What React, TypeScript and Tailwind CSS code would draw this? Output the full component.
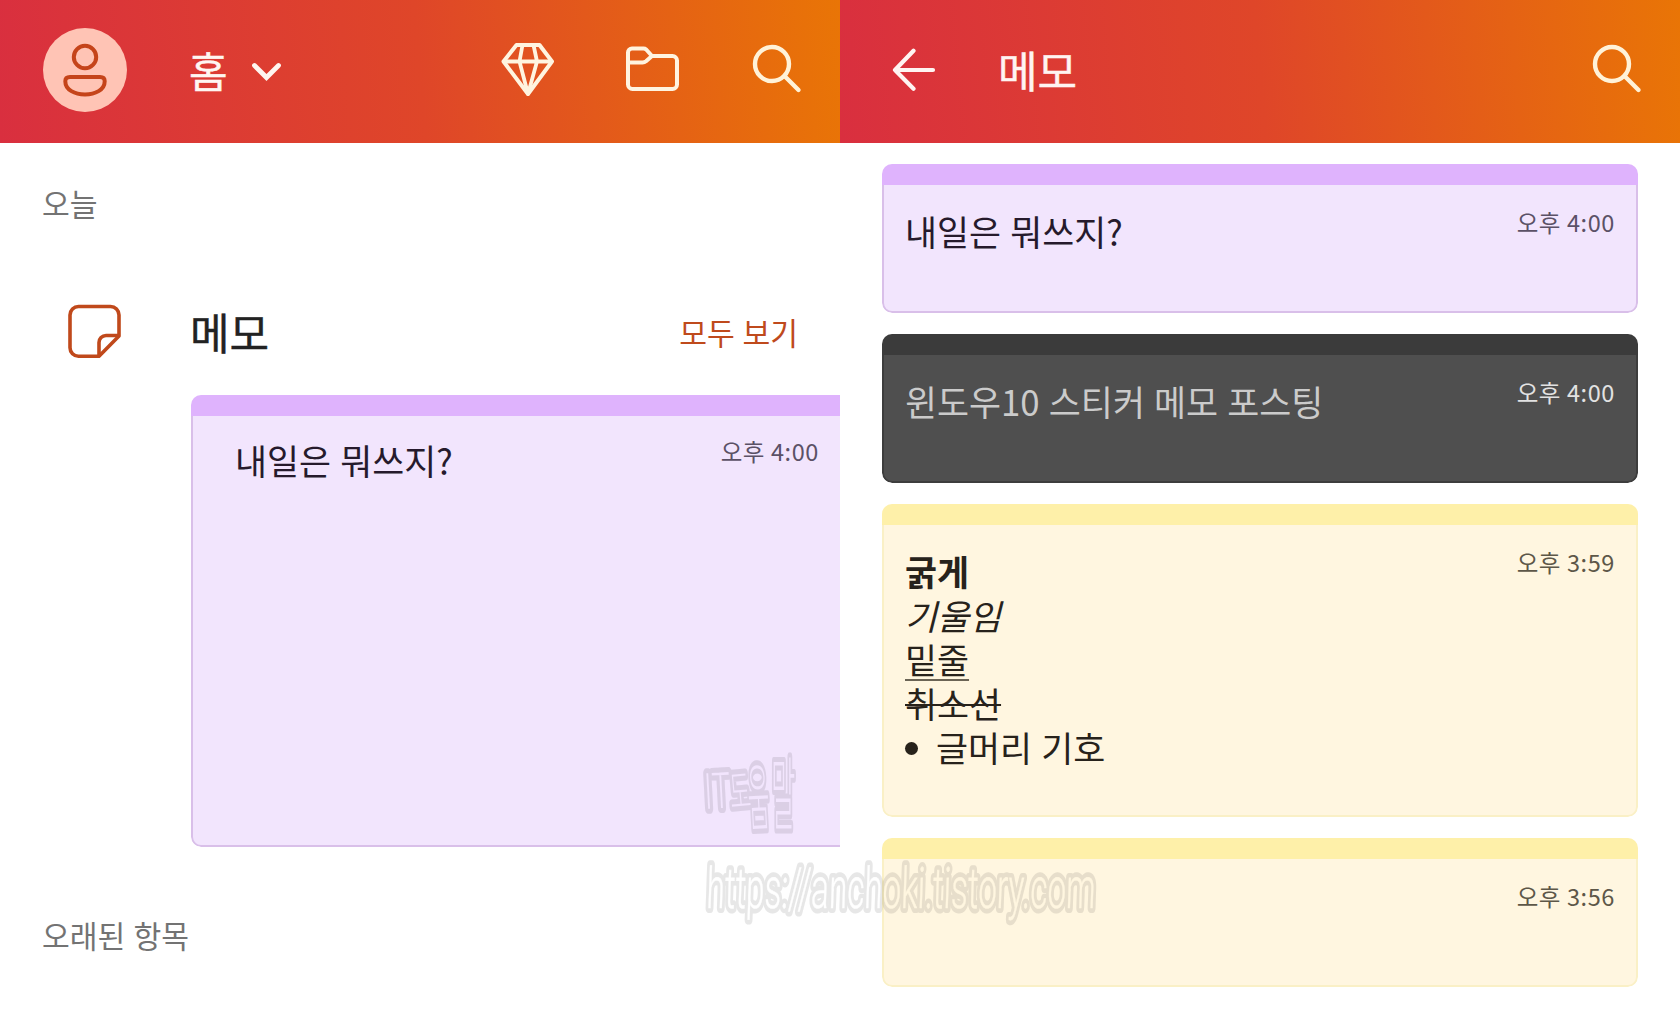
import clsx from "clsx";
import type { ReactNode } from "react";

type Tone = "purple" | "dark" | "yellow";

interface NoteProps {
  tone: Tone;
  time: string;
  className?: string;
  bodyClass?: string;
  children?: ReactNode;
}

const tones: Record<Tone, { card: string; bar: string; text: string; time: string }> = {
  purple: {
    card: "border-[#d9bfe9] bg-[#f2e5fd]",
    bar: "bg-[#dfb3fd]",
    text: "text-[#261a2c]",
    time: "text-[#5b5166]",
  },
  dark: {
    card: "border-[#3d3d3d] bg-[#4f4f4f]",
    bar: "bg-[#3b3b3b]",
    text: "text-[#cbcbcb]",
    time: "text-[#e2e2e2]",
  },
  yellow: {
    card: "border-[#faf0c6] bg-[#fff6e0]",
    bar: "bg-[#fef0a9]",
    text: "text-[#27221b]",
    time: "text-[#5d5748]",
  },
};

const gradient = "bg-[linear-gradient(85deg,#d92f3f_0%,#df4629_50%,#e97506_100%)]";

const Note = ({ tone, time, className, bodyClass, children }: NoteProps) => {
  const t = tones[tone];
  return (
    <article className={clsx("flex flex-col overflow-hidden", className)}>
      <div className={clsx("h-[21px] shrink-0", t.bar)} />
      <div className={clsx("flex flex-1 items-start justify-between border-2 border-t-0", t.card, bodyClass)}>
        <div className={clsx("text-[34.8px] leading-[44px] [word-spacing:1.4px]", t.text)}>{children}</div>
        <time className={clsx("mt-px text-[23.5px] leading-6 tracking-[0.6px]", t.time)}>{time}</time>
      </div>
    </article>
  );
};

const Avatar = () => (
  <div className="flex size-[84px] items-center justify-center rounded-full bg-[#ffc4b5]">
    <svg className="size-[84px]" viewBox="0 0 84 84" fill="none" stroke="#c5441a" strokeWidth="4">
      <circle cx="42" cy="29" r="11.2" />
      <path d="M27 49h30c3 0 4.700 1.600 4.700 4.200C61.700 62 52 66.500 42 66.500S22.300 62 22.300 53.200C22.300 50.600 24 49 27 49Z" />
    </svg>
  </div>
);

const ChevronIcon = () => (
  <svg className="h-5 w-8" viewBox="0 0 32 20" fill="none" stroke="#fff6f0" strokeWidth="4.800" strokeLinecap="round">
    <path d="M4.500 4.500 16.500 16.500 28.500 4.500" />
  </svg>
);

const DiamondIcon = () => (
  <svg className="size-14" viewBox="0 0 56 56" fill="none" stroke="#fff4e0" strokeWidth="4" strokeLinejoin="round">
    <path d="M16.500 3H39.500L52 19.500 28 52 3.500 19.500Z" />
    <path d="M3.500 19.500H52M22.500 3 19.500 19.500 28 52l9-32.500L33.500 3" strokeWidth="3.800" />
  </svg>
);

const FolderIcon = () => (
  <svg className="size-14" viewBox="0 0 56 56" fill="none" stroke="#fff4e0" strokeWidth="4" strokeLinejoin="round">
    <path d="M3 10.500a4 4 0 0 1 4-4h11.500q1.500 0 2.700 1L27 14h20.500a4.500 4.500 0 0 1 4.500 4.500V42.500a4.500 4.500 0 0 1-4.500 4.500h-40A4.500 4.500 0 0 1 3 42.500Z" />
    <path d="M3 20.500h14.500q2 0 3.500-1.200l6-5.300" />
  </svg>
);

const SearchIcon = () => (
  <svg className="h-[52px] w-[50px]" viewBox="0 0 50 52" fill="none" stroke="#fff2d8" strokeWidth="4.400" strokeLinecap="round">
    <circle cx="20" cy="20" r="17" />
    <path d="m33 32.500 13.500 13.500" />
  </svg>
);

const BackIcon = () => (
  <svg className="h-11 w-[46px]" viewBox="0 0 46 44" fill="none" stroke="#fff4f2" strokeWidth="4.200" strokeLinecap="round" strokeLinejoin="round">
    <path d="M42 22H4M22.500 2.800 4 22l18.500 18.800" />
  </svg>
);

const NoteIcon = () => (
  <svg className="size-14" viewBox="0 0 56 56" fill="none" stroke="#c0491b" strokeWidth="3.600" strokeLinejoin="round">
    <path d="M33 52.200H12.500a8.500 8.500 0 0 1-8.500-8.500V11A8.500 8.500 0 0 1 12.500 2.500h32A8.500 8.500 0 0 1 53 11v21Z" />
    <path d="M53 31.500H40a7 7 0 0 0-7 7v13.700" />
  </svg>
);

// Hollow lettering: a wide stroke with the middle of each letter cut out
const Watermark = () => (
  <svg className="pointer-events-none absolute left-[690px] top-[740px] h-[220px] w-[430px]" viewBox="0 0 430 220">
    <defs>
      <g id="mark-name" fontFamily="Roboto, 'Noto Sans CJK KR', sans-serif" fontWeight="300">
        <text transform="translate(15 69) rotate(-3) scale(.62 1)" fontSize="50">IT</text>
        <text transform="translate(41 69) rotate(-5) scale(.5 1)" fontSize="46">도</text>
        <text transform="translate(59 85) rotate(-3) scale(.32 1)" fontSize="74">움</text>
        <text transform="translate(81 83) scale(.33 1)" fontSize="80">말</text>
      </g>
      <g id="mark-url" fontFamily="Roboto, sans-serif" fontWeight="300">
        <text transform="translate(16 168) skewX(-2)" fontSize="57" textLength="389" lengthAdjust="spacingAndGlyphs">
          https://anchoki.tistory.com
        </text>
      </g>
      <mask id="hollow">
        <g stroke="white" fill="white" strokeLinejoin="round" strokeLinecap="round">
          <use href="#mark-name" strokeWidth="10" />
          <use href="#mark-url" strokeWidth="10" />
        </g>
        <use href="#mark-name" fill="black" />
        <use href="#mark-url" fill="black" stroke="black" strokeWidth="0.600" />
      </mask>
    </defs>
    <rect width="430" height="220" fill="#000" fillOpacity="0.095" mask="url(#hollow)" />
  </svg>
);

const HomePane = () => (
  <section className="h-full w-[840px] overflow-hidden">
    <header className={clsx("flex h-[143px] items-center pb-[3px] pl-[43px] pr-[38px]", gradient)}>
      <Avatar />
      <h1 className="ml-[62px] pb-px text-[42px] leading-none text-[#fff6f2] [-webkit-text-stroke:0.4px]">홈</h1>
      <div className="ml-[22px] pt-0.5">
        <ChevronIcon />
      </div>
      <div className="ml-auto flex items-center">
        <DiamondIcon />
        <div className="ml-[69px]">
          <FolderIcon />
        </div>
        <div className="ml-[71px]">
          <SearchIcon />
        </div>
      </div>
    </header>
    <div className="pl-[42px] pt-[39px] text-[30.2px] leading-[42px] text-[#737373]">오늘</div>
    <div className="mt-[78px] flex h-[60px] items-center pl-[66px] pr-[42px]">
      <NoteIcon />
      <h2 className="ml-[68px] pb-0.5 text-[43px] leading-[58px] text-[#222] [-webkit-text-stroke:0.4px]">메모</h2>
      <a className="ml-auto pb-px text-[30.2px] leading-[58px] text-[#bf4a1c] [word-spacing:1px]">모두 보기</a>
    </div>
    <Note
      tone="purple"
      time="오후 4:00"
      className="ml-[191px] mt-[33px] h-[452px] rounded-l-[10px]"
      bodyClass="rounded-bl-[10px] border-r-0 pl-[42px] pr-[21px] pt-[22px]"
    >
      내일은 뭐쓰지?
    </Note>
    <div className="pl-[42px] pt-[67px] text-[30.2px] leading-[42px] text-[#737373] [word-spacing:1.5px]">오래된 항목</div>
  </section>
);

const MemoPane = () => (
  <section className="h-full w-[840px] overflow-hidden">
    <header className={clsx("flex h-[143px] items-center pb-[3px] pl-[51px] pr-[38px]", gradient)}>
      <BackIcon />
      <h1 className="ml-[61px] pb-0.5 text-[43px] leading-none text-[#fff4f2] [-webkit-text-stroke:0.4px]">메모</h1>
      <div className="ml-auto">
        <SearchIcon />
      </div>
    </header>
    <div className="flex flex-col gap-[21px] px-[42px] pt-[21px]">
      <Note tone="purple" time="오후 4:00" className="h-[149px] rounded-[10px]" bodyClass="rounded-b-[10px] px-[21px] pt-6">
        내일은 뭐쓰지?
      </Note>
      <Note tone="dark" time="오후 4:00" className="h-[149px] rounded-[10px]" bodyClass="rounded-b-[10px] px-[21px] pt-6">
        윈도우10 스티커 메모 포스팅
      </Note>
      <Note tone="yellow" time="오후 3:59" className="h-[313px] rounded-[10px]" bodyClass="rounded-b-[10px] px-[21px] pt-6">
        <p className="font-bold">굵게</p>
        <p className="italic">기울임</p>
        <p className="underline decoration-[#6b6455] decoration-2 underline-offset-[5px]">밑줄</p>
        <p className="line-through decoration-2">취소선</p>
        <p className="flex items-center">
          <span className="mr-[18px] mt-0.5 size-[13px] rounded-full bg-[#27221b]" />
          글머리 기호
        </p>
      </Note>
      <Note tone="yellow" time="오후 3:56" className="h-[149px] rounded-[10px]" bodyClass="rounded-b-[10px] px-[21px] pt-6" />
    </div>
  </section>
);

const App = () => {
  return (
    <main className="relative flex h-[1015px] w-[1680px] overflow-hidden bg-white font-['Noto_Sans_CJK_KR',sans-serif]">
      <HomePane />
      <MemoPane />
      <Watermark />
    </main>
  );
};

export default App;
